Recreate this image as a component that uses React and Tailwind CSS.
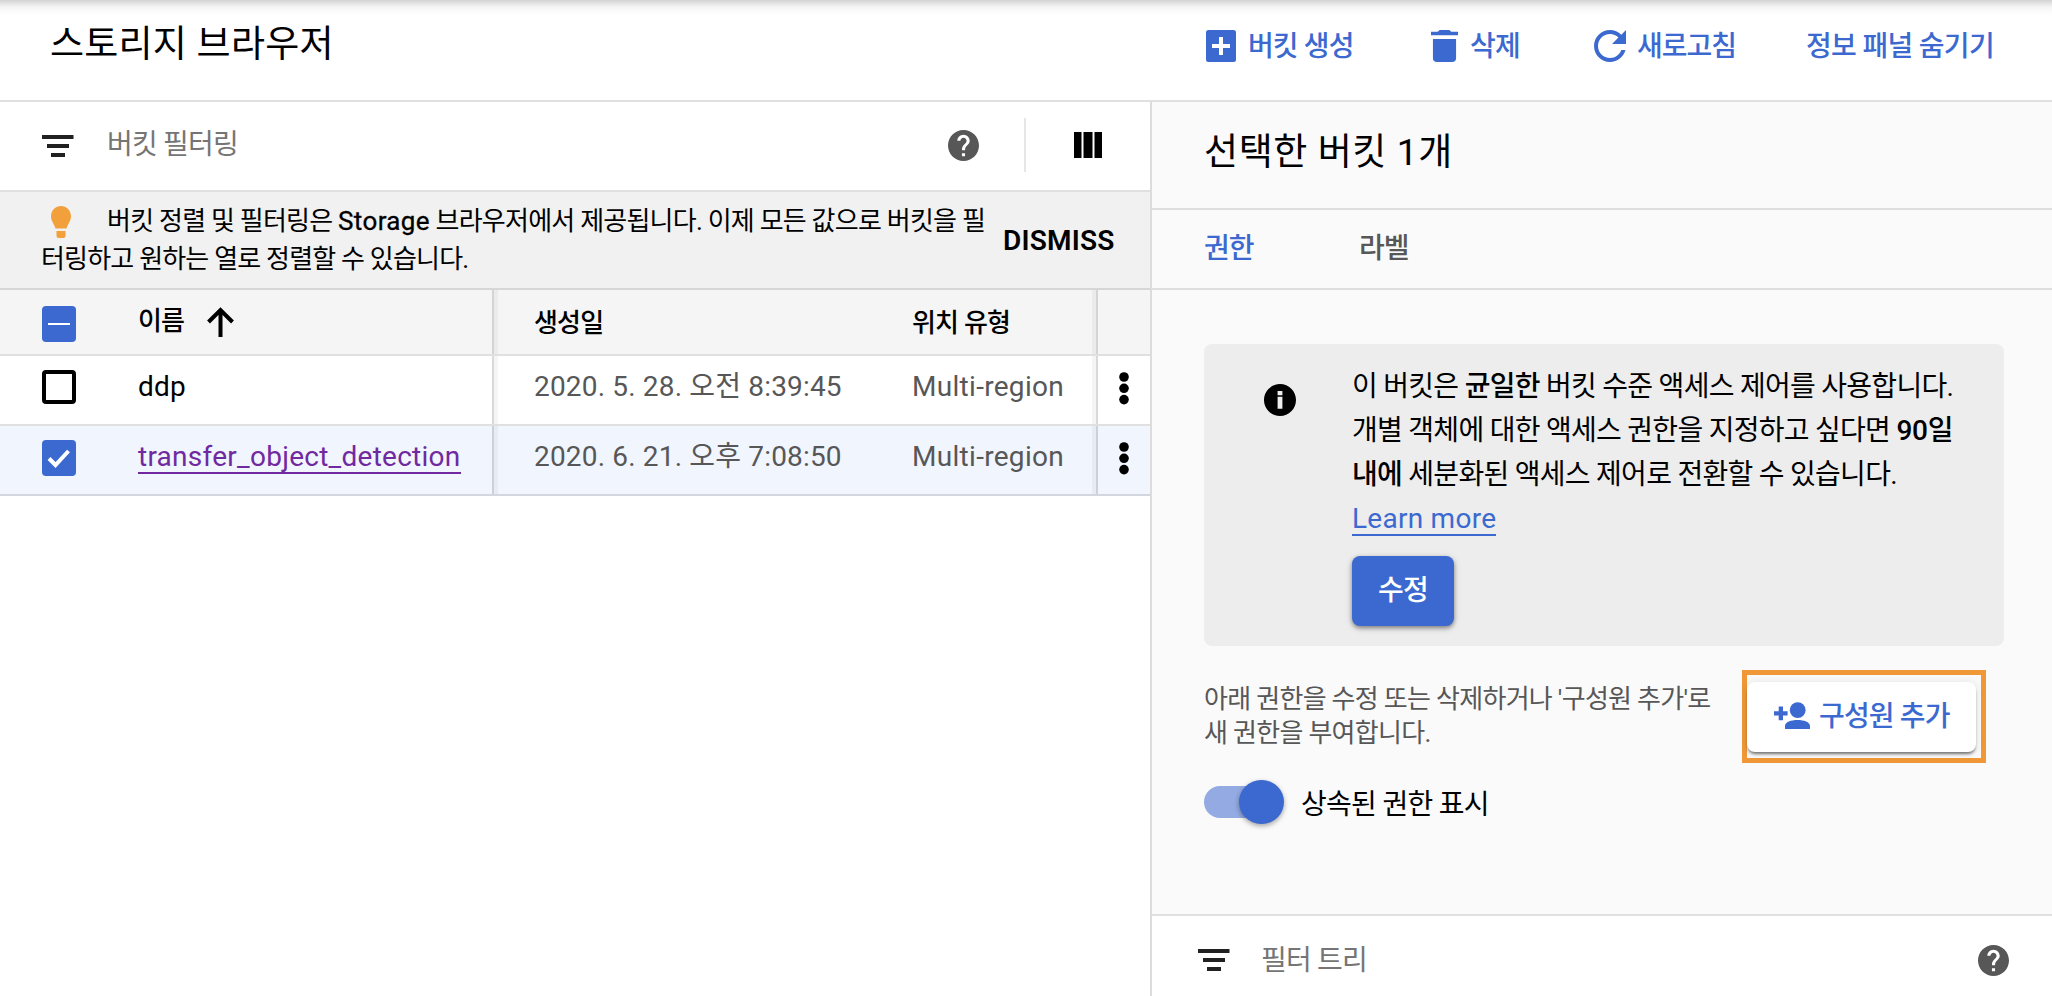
import React from "react";

const T = ({ className = "", children }) => (
  <span className={"whitespace-nowrap " + className}>{children}</span>
);

const FilterIcon = ({ className = "" }) => (
  <svg className={"h-[22px] w-8 shrink-0 " + className} viewBox="0 0 32 22" fill="#212121">
    <rect x="0" y="0" width="31.5" height="4" />
    <rect x="5" y="9" width="22" height="4" />
    <rect x="9" y="18" width="14" height="4" />
  </svg>
);

const HelpIcon = ({ className = "" }) => (
  <svg className={"h-[31px] w-[31px] shrink-0 " + className} viewBox="2 2 20 20" fill="#575757">
    <path d="M12 2C6.48 2 2 6.48 2 12s4.48 10 10 10 10-4.48 10-10S17.52 2 12 2zm1 17h-2v-2h2v2zm2.07-7.75-.9.92C13.45 12.9 13 13.5 13 15h-2v-.5c0-1.1.45-2.1 1.17-2.83l1.24-1.26c.37-.36.59-.86.59-1.41 0-1.1-.9-2-2-2s-2 .9-2 2H8c0-2.21 1.79-4 4-4s4 1.79 4 4c0 .88-.36 1.68-.93 2.25z" />
  </svg>
);

const MoreIcon = () => (
  <svg className="h-[34px] w-[10px]" viewBox="0 0 10 34" fill="#000">
    <circle cx="5" cy="5" r="4.8" />
    <circle cx="5" cy="16.300" r="4.8" />
    <circle cx="5" cy="27.600" r="4.8" />
  </svg>
);

const Row = ({ selected, name, date }) => (
  <div
    className={
      "flex h-[70px] border-b-2 " +
      (selected ? "border-[#d3d6df] bg-[#f0f5fe]" : "border-[#e0e0e0] bg-white")
    }
  >
    <div className="flex w-[494px] shrink-0 border-r-2 border-black/15 pl-[42px]">
      {selected ? (
        <div className="mt-[14px] flex h-9 w-[34px] items-center justify-center rounded-[4px] bg-[#3c69d0]">
          <svg className="h-5 w-6" viewBox="0 0 24 20" fill="none" stroke="#fff" strokeWidth="4">
            <path d="M2 10.5 8.5 17 21.5 3" />
          </svg>
        </div>
      ) : (
        <div className="mt-[14px] h-[34px] w-[34px] rounded-[4px] border-4 border-black" />
      )}
      <div className="ml-[62px] tracking-[0.26px]">
        {selected ? (
          <T className="mt-[14px] block h-[34px] border-b-2 border-[#7129a0] text-[28px] leading-[33px] text-[#7129a0]">{name}</T>
        ) : (
          <T className="mt-[15px] block text-[28px] leading-[32px] text-black">{name}</T>
        )}
      </div>
    </div>
    <div className="w-1 shrink-0 bg-black/4" />
    <div className="flex w-[594px] shrink-0 pl-9 pt-[15px] text-[28px] leading-[32px] text-[#575757]">
      <T className="w-[378px] tracking-[0.17px]">{date}</T>
      <T className="tracking-[0.3px]">Multi-region</T>
    </div>
    <div className="w-1 shrink-0 bg-black/4" />
    <div className="flex w-[54px] shrink-0 border-l-2 border-black/15 pl-[21px] pt-[16px]">
      <MoreIcon />
    </div>
  </div>
);

export default function App() {
  return (
    <div className="flex h-[996px] w-[2052px] flex-col overflow-hidden bg-white font-['Roboto','Noto_Sans_CJK_KR',sans-serif] text-black">
      <header className="flex h-[102px] shrink-0 border-b-2 border-[#e0e0e0] bg-[linear-gradient(to_bottom,#d2d2d2_0px,#e2e2e2_3px,#f4f4f4_7px,#fcfcfc_12px,#ffffff_16px)]">
        <T className="w-[1156px] pl-[50px] pt-[22px] text-[37px] leading-[46px] tracking-[0.25px]">스토리지 브라우저</T>
        <div className="mt-[30px] flex h-8 pl-[50px] text-[28px] font-medium leading-[34px] text-[#3c69d0]">
          <div className="flex w-[225px]">
            <svg className="h-8 w-[30px]" viewBox="0 0 30 32">
              <rect width="30" height="32" rx="2.500" fill="#3c69d0" />
              <path d="M15 7v18M6 16h18" stroke="#fff" strokeWidth="4" />
            </svg>
            <T className="ml-3 tracking-[-0.9px]">버킷 생성</T>
          </div>
          <div className="flex w-[163px]">
            <svg className="h-8 w-[27px]" viewBox="5 3 14 18" preserveAspectRatio="none" fill="#3c69d0">
              <path d="M6 19c0 1.100.900 2 2 2h8c1.100 0 2-.900 2-2V8H6v11zM19 4h-3.500l-1-1h-5l-1 1H5v2h14V4z" />
            </svg>
            <T className="ml-3 tracking-[-0.7px]">삭제</T>
          </div>
          <div className="flex w-[212px]">
            <svg className="h-8 w-8" viewBox="4 4 16 16" fill="#3c69d0">
              <path d="M17.650 6.350C16.200 4.900 14.210 4 12 4c-4.420 0-7.990 3.580-7.990 8s3.570 8 7.990 8c3.730 0 6.840-2.550 7.730-6h-2.080c-.820 2.330-3.040 4-5.650 4-3.310 0-6-2.690-6-6s2.690-6 6-6c1.660 0 3.140.690 4.220 1.780L13 11h7V4l-2.350 2.350z" />
            </svg>
            <T className="ml-[11px] tracking-[-1px]">새로고침</T>
          </div>
          <T className="tracking-[-0.7px]">정보 패널 숨기기</T>
        </div>
      </header>

      <div className="flex min-h-0 flex-1">
        <main className="w-[1152px] shrink-0 border-r-2 border-[#dcdcdc]">
          <div className="flex h-[90px] border-b-2 border-[#e0e0e0]">
            <FilterIcon className="ml-[42px] mt-[33px]" />
            <T className="ml-[33px] mt-[27px] w-[841px] text-[28px] leading-[32px] tracking-[-0.8px] text-[#757575]">버킷 필터링</T>
            <HelpIcon className="mt-[28px]" />
            <div className="ml-[45px] mt-4 h-[54px] w-[2px] bg-[#e6e6e6]" />
            <svg className="ml-12 mt-[30px] h-[26px] w-7" viewBox="0 0 28 26">
              <path d="M0 0h7.500v26H0zM9.500 0h9v26h-9zM20.500 0h7.500v26h-7.500z" />
            </svg>
          </div>

          <div className="flex h-[98px] border-b-2 border-[#d6d6d6] bg-[#f1f1f1]">
            <div className="w-[961px] shrink-0 pl-[42px] pt-[10px] text-[26px] leading-[38px] tracking-[-0.8px]">
              <div className="flex">
                <svg className="ml-[9px] mr-[36px] mt-1 h-8 w-5 shrink-0" viewBox="0 0 20 32" fill="#f2a03c">
                  <path d="M10 0C4.400 0 0 4.500 0 10.500c0 4.500 3 7 4.500 12h11c1.500-5 4.500-7.500 4.500-12C20 4.500 15.600 0 10 0zM5.500 25h9v5a2 2 0 0 1-2 2h-5a2 2 0 0 1-2-2z" />
                </svg>
                <T className="tracking-[-0.77px]">버킷 정렬 및 필터링은 <span className="tracking-[0.35px] [-webkit-text-stroke:0.3px_black]">Storage</span> 브라우저에서 제공됩니다. 이제 모든 값으로 버킷을 필</T>
              </div>
              <T className="-ml-px block">터링하고 원하는 열로 정렬할 수 있습니다.</T>
            </div>
            <T className="ml-[42px] mt-[33px] text-[28px] font-semibold leading-[32px] tracking-[0.2px]">DISMISS</T>
          </div>

          <div className="flex h-[66px] border-b-2 border-[#e0e0e0] bg-[#f5f5f5] text-[26px] font-medium leading-[32px] tracking-[-0.8px]">
            <div className="flex w-[494px] shrink-0 border-r-2 border-[#d4d4d4] pl-[42px]">
              <div className="mt-4 flex h-9 w-[34px] items-center justify-center rounded-[4px] bg-[#3c69d0]">
                <div className="h-[2px] w-[22px] bg-white" />
              </div>
              <T className="ml-[62px] mt-[15px] w-[69px]">이름</T>
              <svg className="mt-[17px] h-[30px] w-[27px]" viewBox="0 0 27 30" fill="none" stroke="#000" strokeWidth="4">
                <path d="M13.500 30V3M1.500 15 13.500 3l12 12" />
              </svg>
            </div>
            <div className="w-1 shrink-0 bg-[#ebebeb]" />
            <div className="flex w-[594px] shrink-0 pl-9 pt-[17px]">
              <T className="w-[378px]">생성일</T>
              <T>위치 유형</T>
            </div>
            <div className="w-1 shrink-0 bg-[#ebebeb]" />
            <div className="w-[54px] shrink-0 border-l-2 border-[#d4d4d4]" />
          </div>
          <Row name="ddp" date="2020. 5. 28. 오전 8:39:45" />
          <Row selected name="transfer_object_detection" date="2020. 6. 21. 오후 7:08:50" />
        </main>

        <aside className="flex flex-1 flex-col bg-[#fafafa]">
          <div className="h-[108px] shrink-0 border-b-2 border-[#dedede] pl-[52px] pt-[28px] text-[37px] leading-[46px]">
            <T className="tracking-[0.6px]">선택한 버킷 1개</T>
          </div>
          <div className="flex h-20 shrink-0 border-b-2 border-[#dedede] pl-[52px] pt-[23px] text-[28px] font-medium leading-[32px] tracking-[-0.9px]">
            <T className="w-[155px] text-[#3c69d0]">권한</T>
            <T className="text-[#575757]">라벨</T>
          </div>

          <section className="ml-[52px] mt-[54px] flex h-[302px] w-[800px] shrink-0 rounded-lg bg-[#ededed]">
            <svg className="ml-[60px] mt-10 h-8 w-8" viewBox="2 2 20 20">
              <path d="M12 2C6.480 2 2 6.480 2 12s4.480 10 10 10 10-4.480 10-10S17.520 2 12 2zm1.500 15.500h-3v-7.500h3v7.500zm0-8.500h-3V6.400h3v2.600z" />
            </svg>
            <div className="ml-14 pt-[21px] text-[28px] leading-[44px] tracking-[-0.72px]">
              <T className="block">이 버킷은 <b className="font-medium">균일한</b> 버킷 수준 액세스 제어를 사용합니다.</T>
              <T className="block">개별 객체에 대한 액세스 권한을 지정하고 싶다면 <b className="font-medium tracking-[-0.2px]">90일</b></T>
              <T className="block"><b className="font-medium">내에</b> 세분화된 액세스 제어로 전환할 수 있습니다.</T>
              <T className="mt-1 block h-[35px] w-fit border-b-2 border-[#3c69d0] leading-[35px] tracking-[0.26px] text-[#3c69d0]">Learn more</T>
              <button className="mt-5 flex h-[70px] w-[102px] items-center justify-center rounded-lg bg-[#3c69d0] font-medium text-white shadow-[0_2px_4px_rgba(0,0,0,0.4),0_2px_8px_rgba(0,0,0,0.12)]">수정</button>
            </div>
          </section>

          <div className="ml-[52px] mt-6 flex h-[93px] shrink-0">
            <div className="w-[538px] pt-3 text-[26px] leading-[34px] tracking-[-0.7px] text-[#575757]">
              <T className="block">아래 권한을 수정 또는 삭제하거나 '구성원 추가'로</T>
              <T className="block">새 권한을 부여합니다.</T>
            </div>
            <div className="h-[93px] w-[244px] border-[5px] border-[#f09837] pt-[7px]">
              <button className="flex h-[70px] w-[229px] rounded-lg bg-white pl-[27px] text-[28px] font-medium tracking-[-0.85px] text-[#3c69d0] shadow-[0_3px_3px_-1px_rgba(0,0,0,0.5),0_1px_8px_rgba(0,0,0,0.12)]">
                <svg className="mt-5 h-7 w-9" viewBox="0 0 36 28" fill="#3c69d0">
                  <circle cx="23.700" cy="8.200" r="7.900" />
                  <path d="M11 27v-3c0-4 6-6 12.500-6S36 20 36 24v3zM4.700 4.500h4.300v4.700h4.600v4.300H9v4.700H4.700v-4.700H0V9.200h4.700z" />
                </svg>
                <T className="ml-[9px] mt-[19px] leading-[32px]">구성원 추가</T>
              </button>
            </div>
          </div>

          <div className="ml-[52px] mt-[17px] flex h-11 shrink-0 items-center">
            <div className="flex h-8 w-[78px] items-center justify-end rounded-full bg-[#93aae2]">
              <div className="-mr-0.5 h-11 w-[45px] shrink-0 rounded-full bg-[#3c69d0] shadow-[0_2px_5px_rgba(0,0,0,0.35)]" />
            </div>
            <T className="ml-[19px] mt-[5px] text-[28px] leading-[32px] tracking-[-0.7px]">상속된 권한 표시</T>
          </div>

          <div className="mt-auto flex h-[82px] shrink-0 border-t-2 border-[#e0e0e0] bg-white">
            <FilterIcon className="ml-[46px] mt-[33px]" />
            <T className="ml-[31px] mt-[29px] w-[717px] text-[28px] leading-[32px] tracking-[-0.8px] text-[#757575]">필터 트리</T>
            <HelpIcon className="mt-[29px]" />
          </div>
        </aside>
      </div>
    </div>
  );
}
